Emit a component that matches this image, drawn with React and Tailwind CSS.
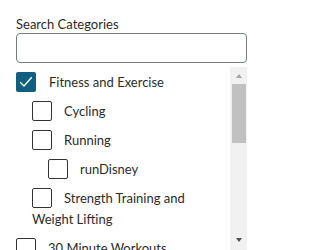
const items = [
  { label: 'Fitness and Exercise', depth: 0, checked: true },
  { label: 'Cycling', depth: 1 },
  { label: 'Running', depth: 1 },
  { label: 'runDisney', depth: 2 },
  { label: 'Strength Training and Weight Lifting', depth: 1 },
  { label: '30 Minute Workouts', depth: 0 },
  { label: 'Yoga', depth: 0 },
  { label: 'Pilates', depth: 0 },
];

const indent = ['ml-0', 'ml-4', 'ml-8'];

function Box({ checked }) {
  if (checked) {
    return (
      <span className="inline-flex w-5 h-5 align-top mr-[13px] rounded-[2px] bg-[#105f7f] items-center justify-center">
        <svg width="16" height="16" viewBox="0 0 16 16" fill="none" stroke="white" strokeWidth="1.3" strokeLinecap="round" strokeLinejoin="round">
          <polyline points="2.5 8.5 6 12 13.5 3.5" />
        </svg>
      </span>
    );
  }
  return <span className="inline-block w-5 h-5 align-top mr-3 rounded-[2px] border border-[#333]" />;
}

export default function App() {
  return (
    <div className="w-[261px] h-[250px] overflow-hidden bg-white pl-4 pr-[14px] pt-4 text-[13px] text-[#2b2b2b] font-['Lato','Open_Sans',sans-serif]">
      <label className="block leading-[16px]">Search Categories</label>
      <input className="block w-full h-[30px] mt-[1px] rounded-[4px] border border-[#767b80] px-2 outline-none" />
      <div className="mt-[4px] h-[183px] flex overflow-hidden">
        <ul className="flex-1 pt-[5px] pr-2">
          {items.map((it) => (
            <li key={it.label} className={`${indent[it.depth]} mb-2 leading-[21px]`}>
              <Box checked={it.checked} />
              {it.label}
            </li>
          ))}
        </ul>
        {/* scrollbar */}
        <div className="w-[17px] bg-[#f1f1f1] flex flex-col items-center">
          <div className="h-[17px] w-full flex items-center justify-center">
            <span className="w-0 h-0 border-x-[3.5px] border-x-transparent border-b-[4px] border-b-[#a3a3a3]" />
          </div>
          <div className="w-[14px] h-[59px] bg-[#c1c1c1]" />
          <div className="flex-1" />
          <div className="h-[17px] w-full flex items-center justify-center mb-[2px]">
            <span className="w-0 h-0 border-x-[3.5px] border-x-transparent border-t-[4px] border-t-[#505050]" />
          </div>
        </div>
      </div>
    </div>
  );
}
